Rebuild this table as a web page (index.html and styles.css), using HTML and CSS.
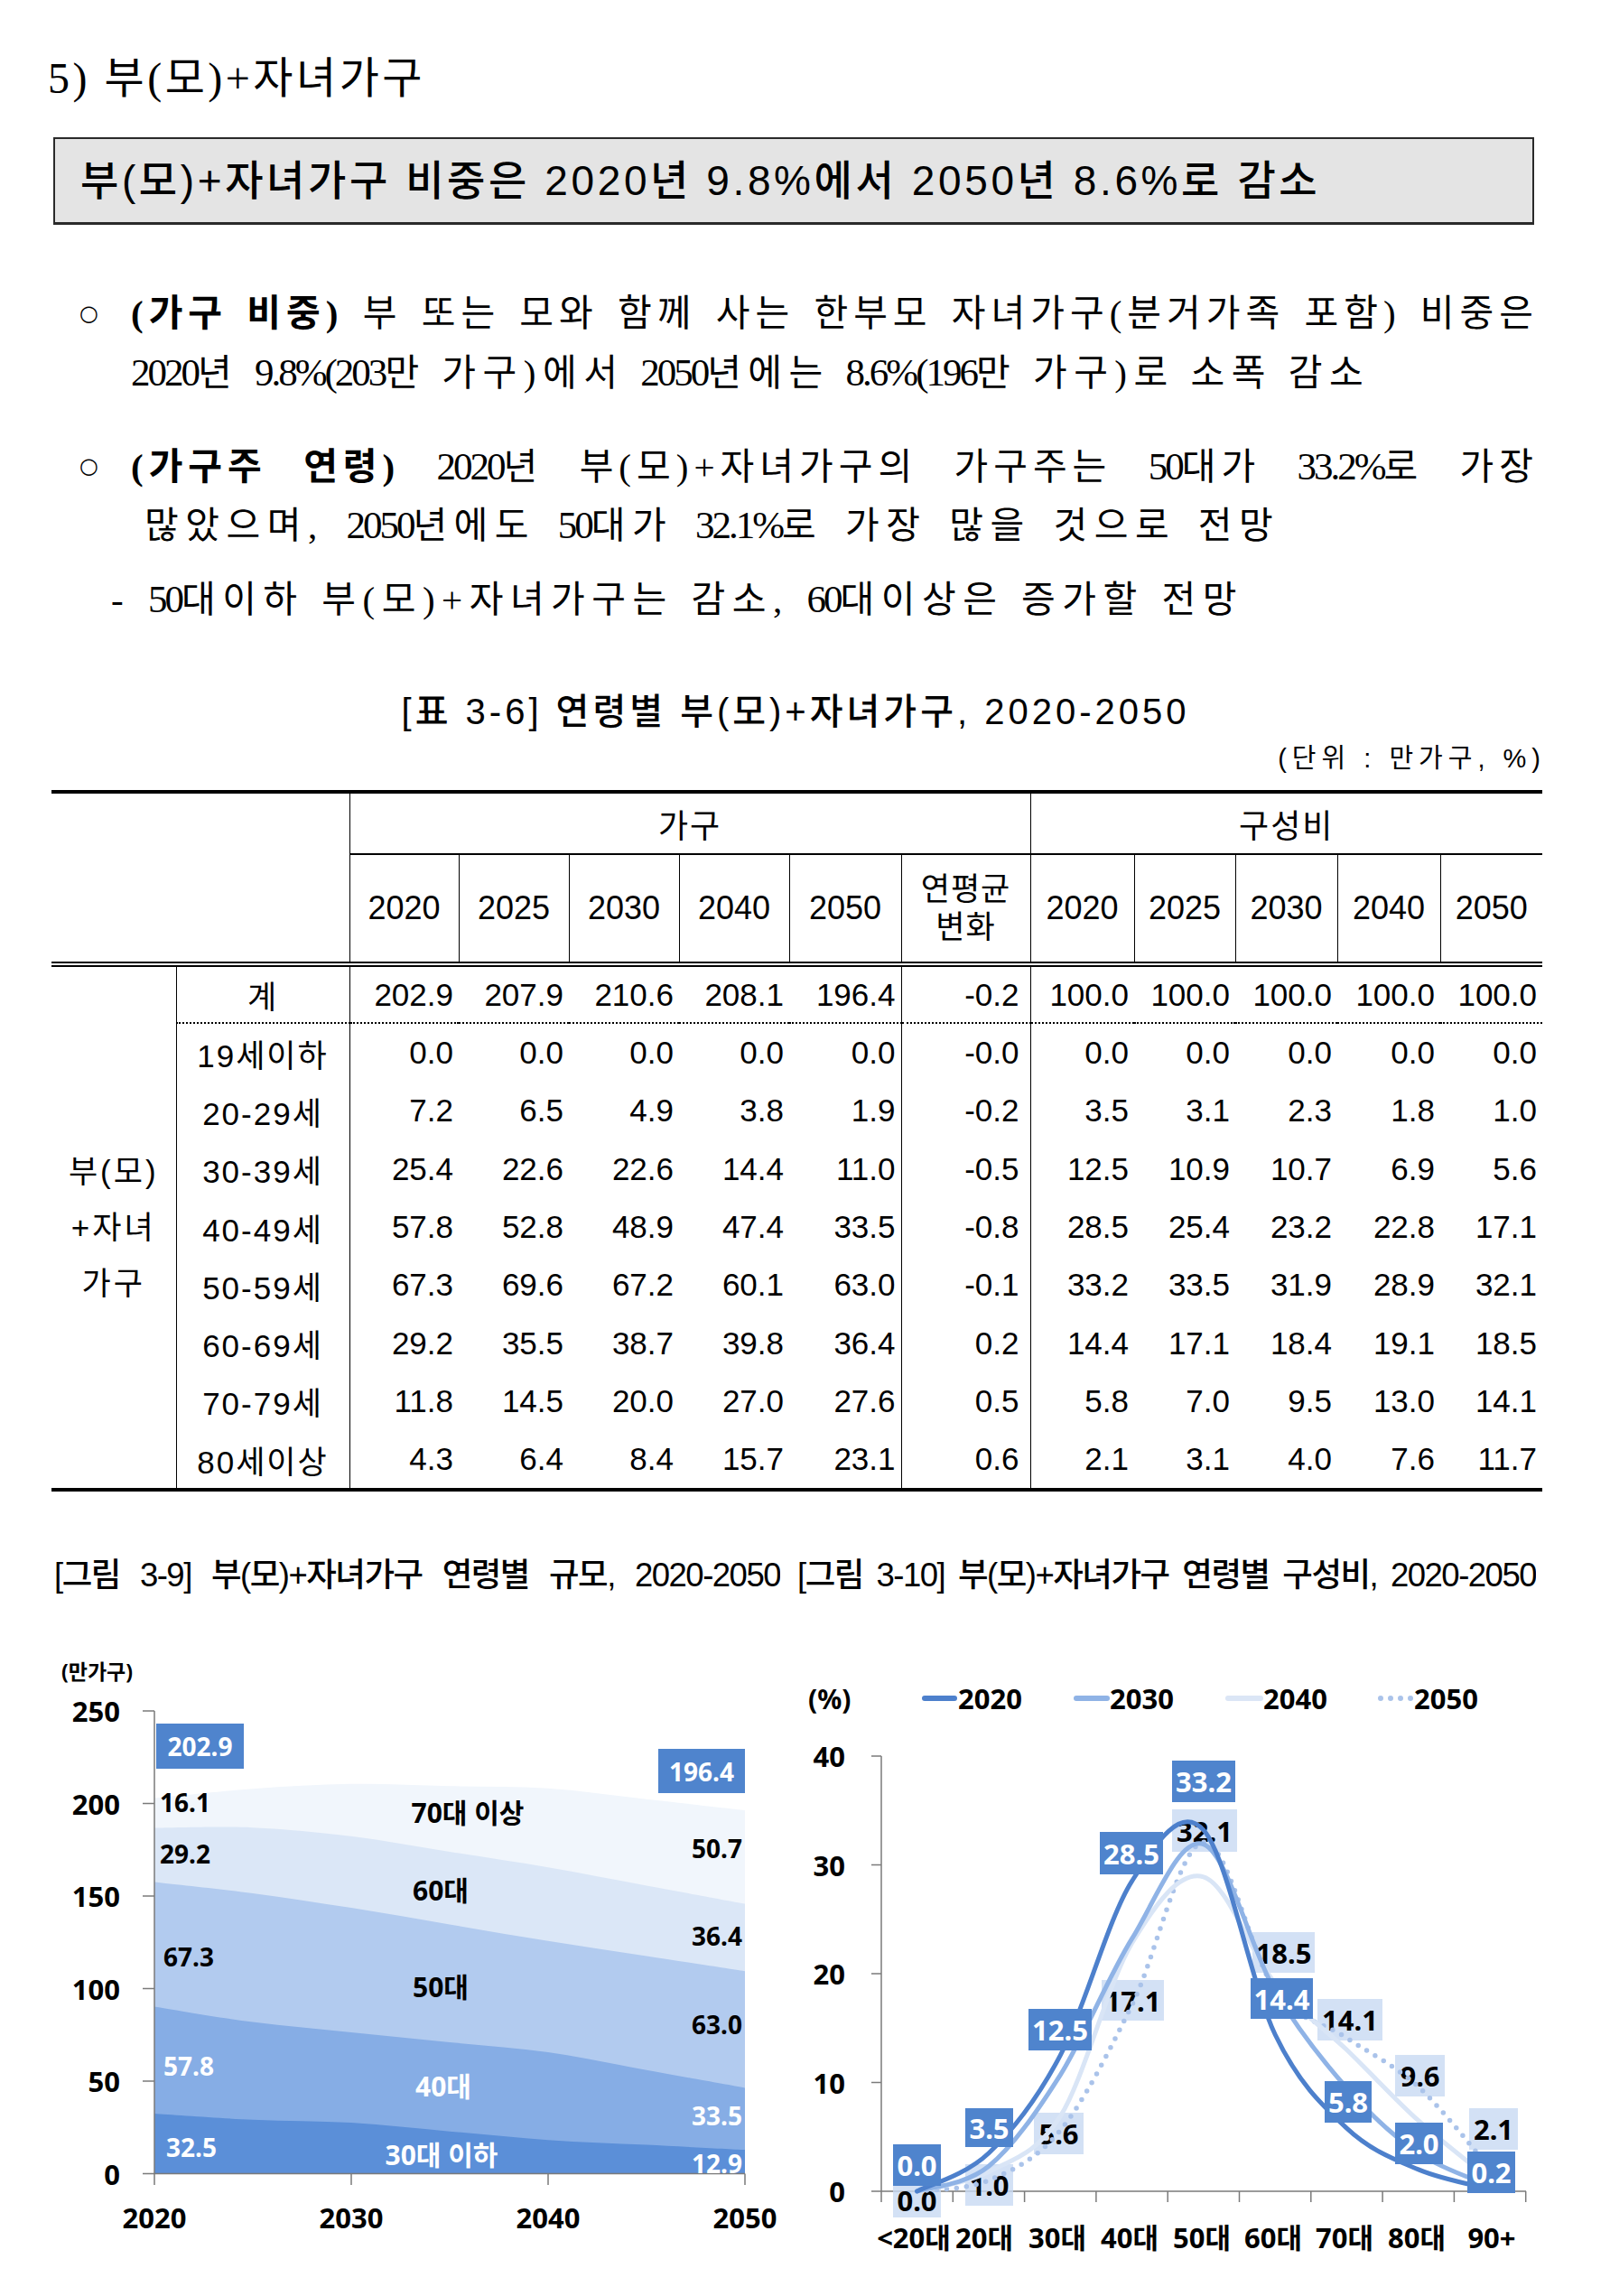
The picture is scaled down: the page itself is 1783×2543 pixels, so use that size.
FILE: index.html
```html
<!DOCTYPE html>
<html lang="ko">
<head>
<meta charset="utf-8">
<title>부(모)+자녀가구</title>
<link rel="stylesheet" href="styles.css">
</head>
<body>
<div class="page">
  <h1 class="sec-title">5) 부(모)+자녀가구</h1>
  <div class="summary">부(모)+자녀가구 비중은 2020년 9.8%에서 2050년 8.6%로 감소</div>

  <div class="bul b1">
    <span class="mk">○</span>
    <div class="tx">
      <div class="ln just"><b>(가구 비중)</b> 부 또는 모와 함께 사는 한부모 자녀가구(분거가족 포함) 비중은</div>
      <div class="ln"><span class="n">2020</span>년 <span class="n">9.8%(203</span>만 가구)에서 <span class="n">2050</span>년에는 <span class="n">8.6%(196</span>만 가구)로 소폭 감소</div>
    </div>
  </div>
  <div class="bul b2">
    <span class="mk">○</span>
    <div class="tx">
      <div class="ln just"><b>(가구주 연령)</b> <span class="n">2020</span>년 부(모)+자녀가구의 가구주는 <span class="n">50</span>대가 <span class="n">33.2%</span>로 가장</div>
      <div class="ln in2">많았으며, <span class="n">2050</span>년에도 <span class="n">50</span>대가 <span class="n">32.1%</span>로 가장 많을 것으로 전망</div>
    </div>
  </div>
  <div class="dash">- <span class="n">50</span>대이하 부(모)+자녀가구는 감소, <span class="n">60</span>대이상은 증가할 전망</div>

  <div class="caption">[표 3-6] 연령별 부(모)+자녀가구, 2020-2050</div>
  <div class="unit">(단위 : 만가구, %)</div>

  <table class="tbl">
    <colgroup>
      <col class="w138"><col class="w192">
      <col class="w121"><col class="w122"><col class="w122"><col class="w122"><col class="w124">
      <col class="w143">
      <col class="w115"><col class="w112"><col class="w113"><col class="w114"><col class="w113">
    </colgroup>
    <thead>
      <tr class="hr1">
        <th class="corner" colspan="2" rowspan="2"></th>
        <th class="grp g1" colspan="6">가구</th>
        <th class="grp" colspan="5">구성비</th>
      </tr>
      <tr class="hr2">
        <th>2020</th><th>2025</th><th>2030</th><th>2040</th><th>2050</th>
        <th class="chgh">연평균<br>변화</th>
        <th>2020</th><th>2025</th><th>2030</th><th>2040</th><th>2050</th>
      </tr>
    </thead>
    <tbody>
      <tr class="total">
        <td class="grpl" rowspan="9">부(모)<br>+자녀<br>가구</td>
        <td class="age">계</td>
        <td>202.9</td><td>207.9</td><td>210.6</td><td>208.1</td><td>196.4</td>
        <td class="chg">-0.2</td>
        <td>100.0</td><td>100.0</td><td>100.0</td><td>100.0</td><td>100.0</td>
      </tr>
      <tr>
        <td class="age">19세이하</td>
        <td>0.0</td><td>0.0</td><td>0.0</td><td>0.0</td><td>0.0</td>
        <td class="chg">-0.0</td>
        <td>0.0</td><td>0.0</td><td>0.0</td><td>0.0</td><td>0.0</td>
      </tr>
      <tr>
        <td class="age">20-29세</td>
        <td>7.2</td><td>6.5</td><td>4.9</td><td>3.8</td><td>1.9</td>
        <td class="chg">-0.2</td>
        <td>3.5</td><td>3.1</td><td>2.3</td><td>1.8</td><td>1.0</td>
      </tr>
      <tr>
        <td class="age">30-39세</td>
        <td>25.4</td><td>22.6</td><td>22.6</td><td>14.4</td><td>11.0</td>
        <td class="chg">-0.5</td>
        <td>12.5</td><td>10.9</td><td>10.7</td><td>6.9</td><td>5.6</td>
      </tr>
      <tr>
        <td class="age">40-49세</td>
        <td>57.8</td><td>52.8</td><td>48.9</td><td>47.4</td><td>33.5</td>
        <td class="chg">-0.8</td>
        <td>28.5</td><td>25.4</td><td>23.2</td><td>22.8</td><td>17.1</td>
      </tr>
      <tr>
        <td class="age">50-59세</td>
        <td>67.3</td><td>69.6</td><td>67.2</td><td>60.1</td><td>63.0</td>
        <td class="chg">-0.1</td>
        <td>33.2</td><td>33.5</td><td>31.9</td><td>28.9</td><td>32.1</td>
      </tr>
      <tr>
        <td class="age">60-69세</td>
        <td>29.2</td><td>35.5</td><td>38.7</td><td>39.8</td><td>36.4</td>
        <td class="chg">0.2</td>
        <td>14.4</td><td>17.1</td><td>18.4</td><td>19.1</td><td>18.5</td>
      </tr>
      <tr>
        <td class="age">70-79세</td>
        <td>11.8</td><td>14.5</td><td>20.0</td><td>27.0</td><td>27.6</td>
        <td class="chg">0.5</td>
        <td>5.8</td><td>7.0</td><td>9.5</td><td>13.0</td><td>14.1</td>
      </tr>
      <tr>
        <td class="age">80세이상</td>
        <td>4.3</td><td>6.4</td><td>8.4</td><td>15.7</td><td>23.1</td>
        <td class="chg">0.6</td>
        <td>2.1</td><td>3.1</td><td>4.0</td><td>7.6</td><td>11.7</td>
      </tr>
    </tbody>
  </table>

  <div class="fig-titles">
    <span class="ft ft1">[그림 3-9] 부(모)+자녀가구 연령별 규모, 2020-2050</span>
    <span class="ft ft2">[그림 3-10] 부(모)+자녀가구 연령별 구성비, 2020-2050</span>
  </div>

  <div class="charts">
    <svg class="chart-l" width="880" height="740" viewBox="0 1790 880 740">
      <path id="a5" class="ar5" d=""/>
      <path id="a4" class="ar4" d=""/>
      <path id="a3" class="ar3" d=""/>
      <path id="a2" class="ar2" d=""/>
      <path id="a1" class="ar1" d=""/>

      <line class="ax" x1="171" y1="1897" x2="171" y2="2409.5"/>
      <line class="ax" x1="158" y1="1897" x2="171" y2="1897"/>
      <line class="ax" x1="158" y1="1999.5" x2="171" y2="1999.5"/>
      <line class="ax" x1="158" y1="2102" x2="171" y2="2102"/>
      <line class="ax" x1="158" y1="2204.5" x2="171" y2="2204.5"/>
      <line class="ax" x1="158" y1="2307" x2="171" y2="2307"/>
      <line class="ax" x1="158" y1="2409.5" x2="825" y2="2409.5"/>
      <line class="ax" x1="171" y1="2409.5" x2="171" y2="2422"/>
      <line class="ax" x1="389" y1="2409.5" x2="389" y2="2422"/>
      <line class="ax" x1="607" y1="2409.5" x2="607" y2="2422"/>
      <line class="ax" x1="825" y1="2409.5" x2="825" y2="2422"/>

      <text class="ct unitl" x="68" y="1853">(만가구)</text>
      <text class="ct yl" x="133" y="1897">250</text>
      <text class="ct yl" x="133" y="1999.5">200</text>
      <text class="ct yl" x="133" y="2102">150</text>
      <text class="ct yl" x="133" y="2204.5">100</text>
      <text class="ct yl" x="133" y="2307">50</text>
      <text class="ct yl" x="133" y="2409.5">0</text>
      <text class="ct xl" x="171" y="2458">2020</text>
      <text class="ct xl" x="389" y="2458">2030</text>
      <text class="ct xl" x="607" y="2458">2040</text>
      <text class="ct xl" x="825" y="2458">2050</text>

      <rect class="bx-d" x="173" y="1911" width="97" height="50"/>
      <text class="ct vl mid wt" x="221.5" y="1936">202.9</text>
      <rect class="bx-d" x="729" y="1939" width="96" height="49"/>
      <text class="ct vl mid wt" x="777" y="1963.5">196.4</text>

      <text class="ct vl" x="177" y="1998">16.1</text>
      <text class="ct vl" x="177" y="2055">29.2</text>
      <text class="ct vl" x="181" y="2169">67.3</text>
      <text class="ct vl wt" x="181" y="2290">57.8</text>
      <text class="ct vl wt" x="184" y="2380">32.5</text>

      <text class="ct vl end" x="822" y="2049">50.7</text>
      <text class="ct vl end" x="822" y="2146">36.4</text>
      <text class="ct vl end" x="822" y="2244">63.0</text>
      <text class="ct vl end wt" x="822" y="2345">33.5</text>
      <text class="ct vl end wt" x="822" y="2398">12.9</text>

      <text class="ct cat" x="518" y="2009">70대 이상</text>
      <text class="ct cat" x="488" y="2095">60대</text>
      <text class="ct cat" x="488" y="2202">50대</text>
      <text class="ct cat wt" x="491" y="2312">40대</text>
      <text class="ct cat wt" x="489" y="2388">30대 이하</text>
    </svg>

    <svg class="chart-r" width="903" height="740" viewBox="880 1790 903 740">
      <text class="ct pct" x="895" y="1883">(%)</text>
      <line class="lg s20" x1="1024" y1="1883" x2="1057" y2="1883"/>
      <text class="ct lgt" x="1061" y="1883">2020</text>
      <line class="lg s30" x1="1192" y1="1883" x2="1226" y2="1883"/>
      <text class="ct lgt" x="1229" y="1883">2030</text>
      <line class="lg s40" x1="1360" y1="1883" x2="1396" y2="1883"/>
      <text class="ct lgt" x="1399" y="1883">2040</text>
      <line class="lg s50" x1="1529" y1="1883" x2="1563" y2="1883"/>
      <text class="ct lgt" x="1566" y="1883">2050</text>

      <line class="ax" x1="976" y1="1947" x2="976" y2="2429"/>
      <line class="ax" x1="965" y1="1947" x2="976" y2="1947"/>
      <line class="ax" x1="965" y1="2067.5" x2="976" y2="2067.5"/>
      <line class="ax" x1="965" y1="2188" x2="976" y2="2188"/>
      <line class="ax" x1="965" y1="2308.5" x2="976" y2="2308.5"/>
      <line class="ax" x1="965" y1="2429" x2="1690" y2="2429"/>
      <line class="ax" x1="976" y1="2429" x2="976" y2="2441"/>
      <line class="ax" x1="1055.3" y1="2429" x2="1055.3" y2="2441"/>
      <line class="ax" x1="1134.6" y1="2429" x2="1134.6" y2="2441"/>
      <line class="ax" x1="1213.9" y1="2429" x2="1213.9" y2="2441"/>
      <line class="ax" x1="1293.2" y1="2429" x2="1293.2" y2="2441"/>
      <line class="ax" x1="1372.5" y1="2429" x2="1372.5" y2="2441"/>
      <line class="ax" x1="1451.8" y1="2429" x2="1451.8" y2="2441"/>
      <line class="ax" x1="1531.1" y1="2429" x2="1531.1" y2="2441"/>
      <line class="ax" x1="1610.4" y1="2429" x2="1610.4" y2="2441"/>
      <line class="ax" x1="1689.7" y1="2429" x2="1689.7" y2="2441"/>

      <text class="ct yl" x="936" y="1947">40</text>
      <text class="ct yl" x="936" y="2067.5">30</text>
      <text class="ct yl" x="936" y="2188">20</text>
      <text class="ct yl" x="936" y="2308.5">10</text>
      <text class="ct yl" x="936" y="2429">0</text>

      <text class="ct xl" x="1012" y="2480">&lt;20대</text>
      <text class="ct xl" x="1090" y="2480">20대</text>
      <text class="ct xl" x="1171" y="2480">30대</text>
      <text class="ct xl" x="1251" y="2480">40대</text>
      <text class="ct xl" x="1331" y="2480">50대</text>
      <text class="ct xl" x="1410" y="2480">60대</text>
      <text class="ct xl" x="1489" y="2480">70대</text>
      <text class="ct xl" x="1569" y="2480">80대</text>
      <text class="ct xl" x="1652" y="2480">90+</text>

      <g class="lights">
        <rect class="bx-l" x="989" y="2420" width="53" height="38"/>
        <text class="ct rl" x="1015.5" y="2439">0.0</text>
        <rect class="bx-l" x="1069" y="2399" width="53" height="46"/>
        <text class="ct rl" x="1095.5" y="2422">1.0</text>
        <rect class="bx-l" x="1145" y="2342" width="55" height="46"/>
        <text class="ct rl" x="1172.5" y="2365">5.6</text>
        <rect class="bx-l" x="1220" y="2195" width="69" height="45"/>
        <text class="ct rl" x="1254.5" y="2217.5">17.1</text>
        <rect class="bx-l" x="1298" y="2006" width="72" height="47"/>
        <text class="ct rl" x="1334" y="2029.5">32.1</text>
        <rect class="bx-l" x="1387" y="2142" width="69" height="45"/>
        <text class="ct rl" x="1421.5" y="2164.5">18.5</text>
        <rect class="bx-l" x="1459" y="2216" width="72" height="46"/>
        <text class="ct rl" x="1495" y="2239">14.1</text>
        <rect class="bx-l" x="1545" y="2278" width="55" height="46"/>
        <text class="ct rl" x="1572.5" y="2301">9.6</text>
        <rect class="bx-l" x="1627" y="2337" width="54" height="46"/>
        <text class="ct rl" x="1654" y="2360">2.1</text>
      </g>

      <path id="s50" class="ln50" d=""/>
      <path id="s40" class="ln40" d=""/>
      <path id="s30" class="ln30" d=""/>
      <path id="s20" class="ln20" d=""/>

      <g class="darks">
        <rect class="bx-d" x="989" y="2377" width="53" height="46"/>
        <text class="ct rl wt" x="1015.5" y="2400">0.0</text>
        <rect class="bx-d" x="1069" y="2337" width="53" height="43"/>
        <text class="ct rl wt" x="1095.5" y="2358.5">3.5</text>
        <rect class="bx-d" x="1139" y="2227" width="70" height="46"/>
        <text class="ct rl wt" x="1174" y="2250">12.5</text>
        <rect class="bx-d" x="1218" y="2031" width="70" height="47"/>
        <text class="ct rl wt" x="1253" y="2054.5">28.5</text>
        <rect class="bx-d" x="1298" y="1952" width="70" height="46"/>
        <text class="ct rl wt" x="1333" y="1975">33.2</text>
        <rect class="bx-d" x="1385" y="2193" width="69" height="45"/>
        <text class="ct rl wt" x="1419.5" y="2215.5">14.4</text>
        <rect class="bx-d" x="1467" y="2307" width="52" height="46"/>
        <text class="ct rl wt" x="1493" y="2330">5.8</text>
        <rect class="bx-d" x="1545" y="2353" width="53" height="46"/>
        <text class="ct rl wt" x="1571.5" y="2376">2.0</text>
        <rect class="bx-d" x="1625" y="2385" width="53" height="46"/>
        <text class="ct rl wt" x="1651.5" y="2408">0.2</text>
      </g>
    </svg>
  </div>
</div>
<script src="script.js"></script>
</body>
</html>
```

FILE: styles.css
```css
html, body {
  margin: 0;
  padding: 0;
  background: #ffffff;
}
body {
  color: #000;
  font-family: "Liberation Serif", "Noto Sans CJK KR", serif;
}
.page {
  width: 1783px;
  padding-top: 57px;
}
.sec-title {
  margin: 0 0 0 53px;
  height: 60px;
  font-size: 48px;
  line-height: 60px;
  font-weight: 400;
  letter-spacing: 3.5px;
  white-space: nowrap;
}
.summary {
  margin: 35px 0 0 59px;
  width: 1640px;
  height: 97px;
  box-sizing: border-box;
  border: 2px solid #2a2a2a;
  border-bottom-width: 3px;
  background: #e4e4e4;
  padding-left: 28px;
  font-family: "Liberation Sans", "Noto Sans CJK KR", sans-serif;
  font-size: 46px;
  line-height: 92px;
  font-weight: 500;
  letter-spacing: 3.6px;
  white-space: nowrap;
}
.bul {
  display: flex;
  margin-left: 88px;
  width: 1616px;
  font-size: 41px;
  line-height: 65px;
  letter-spacing: 7.5px;
}
.b1 { margin-top: 66px; }
.b2 { margin-top: 39px; }
.mk {
  flex: none;
  width: 57px;
  font-family: "DejaVu Sans", sans-serif;
  font-size: 24px;
  line-height: 65px;
  height: 65px;
  letter-spacing: 0;
}
.tx { flex: 1; min-width: 0; }
.ln { height: 65px; white-space: nowrap; }
.ln.just {
  white-space: normal;
  letter-spacing: 6px;
  text-align: justify;
  text-align-last: justify;
  overflow: hidden;
}
.ln b { font-weight: 700; }
.n {
  font-size: 43px;
  letter-spacing: -3px;
}
.in2 { padding-left: 15px; word-spacing: 7px; }
.dash {
  margin: 18px 0 0 123px;
  height: 64px;
  font-size: 41px;
  line-height: 64px;
  letter-spacing: 7.5px;
  word-spacing: 2px;
  white-space: nowrap;
}
.caption {
  margin-top: 68px;
  width: 1762px;
  height: 48px;
  text-align: center;
  font-family: "Liberation Sans", "Noto Sans CJK KR", sans-serif;
  font-size: 40px;
  line-height: 48px;
  font-weight: 500;
  letter-spacing: 4px;
  white-space: nowrap;
}
.unit {
  margin-top: 10px;
  width: 1712px;
  height: 36px;
  text-align: right;
  font-family: "Liberation Sans", "Noto Sans CJK KR", sans-serif;
  font-size: 29px;
  line-height: 36px;
  letter-spacing: 6px;
  white-space: nowrap;
}

/* table */
.tbl {
  margin: 17px 0 0 57px;
  width: 1651px;
  table-layout: fixed;
  border-collapse: collapse;
  border-top: 4px solid #000;
  border-bottom: 4px solid #000;
  font-family: "Liberation Sans", "Noto Sans CJK KR", sans-serif;
  font-size: 36px;
}
.w138 { width: 138px; }
.w192 { width: 192px; }
.w121 { width: 121px; }
.w122 { width: 122px; }
.w124 { width: 124px; }
.w143 { width: 143px; }
.w115 { width: 115px; }
.w112 { width: 112px; }
.w113 { width: 113px; }
.w114 { width: 114px; }
.tbl th, .tbl td {
  padding: 0;
  font-weight: 400;
  vertical-align: middle;
  white-space: nowrap;
}
.tbl .hr1 th { height: 66px; }
.tbl .grp {
  text-align: center;
  border-bottom: 2px solid #000;
  letter-spacing: 2px;
}
.tbl .g1 { border-right: 1px solid #000; }
.tbl .corner {
  border-right: 1px solid #000;
  border-bottom: 6px double #000;
}
.tbl .hr2 th {
  height: 118px;
  text-align: center;
  border-right: 1px solid #000;
  border-bottom: 6px double #000;
}
.tbl .hr2 th:last-child { border-right: 0; }
.tbl .hr2 .chgh {
  font-size: 35px;
  line-height: 42px;
  letter-spacing: 1px;
}
.tbl td {
  height: 64.3px;
  text-align: right;
  padding-right: 6px;
  font-size: 35px;
}
.tbl tr.total td { height: 61px; }
.tbl tr.total td:not(.grpl) { border-bottom: 2px dotted #000; }
.tbl td.grpl {
  text-align: center;
  padding: 0;
  border-right: 1px solid #000;
  line-height: 62px;
  letter-spacing: 3px;
  font-size: 35px;
}
.tbl td.age {
  text-align: center;
  padding: 0;
  border-right: 1px solid #000;
  letter-spacing: 2px;
}
.tbl td.chg {
  padding-right: 12px;
  border-left: 1px solid #000;
  border-right: 1px solid #000;
}

/* figure titles */
.fig-titles {
  display: flex;
  margin-top: 71px;
  height: 44px;
  font-family: "Liberation Sans", "Noto Sans CJK KR", sans-serif;
  font-size: 36.5px;
  font-weight: 500;
  line-height: 44px;
  overflow: hidden;
}
.ft {
  display: block;
  height: 44px;
  text-align: justify;
  text-align-last: justify;
  overflow: hidden;
  letter-spacing: -1.5px;
}
.ft1 { margin-left: 60px; width: 804px; }
.ft2 { margin-left: 19px; width: 818px; }

/* charts */
.charts {
  display: flex;
  margin-top: 21px;
  height: 740px;
}
.charts svg { display: block; flex: none; }
.ct {
  font-family: "Noto Sans", "Noto Sans CJK KR", sans-serif;
  font-weight: 700;
  dominant-baseline: central;
  fill: #000;
}
.unitl { font-size: 23px; }
.yl { font-size: 31px; text-anchor: end; }
.xl { font-size: 31px; text-anchor: middle; }
.vl { font-size: 28px; }
.cat { font-size: 30px; text-anchor: middle; }
.pct { font-size: 30px; }
.lgt { font-size: 31px; }
.rl { font-size: 31px; text-anchor: middle; }
.mid { text-anchor: middle; }
.end { text-anchor: end; }
.ct.wt { fill: #ffffff; }
.ax { stroke: #7a7a7a; stroke-width: 1.5; }

.ar5 { fill: #f1f6fc; }
.ar4 { fill: #dbe7f7; }
.ar3 { fill: #b2cbef; }
.ar2 { fill: #86ade5; }
.ar1 { fill: #5b8fd8; }

.bx-d { fill: #4f84cd; }
.bx-l { fill: rgba(200, 218, 242, 0.8); }

.lg { stroke-width: 6; stroke-linecap: round; fill: none; }
.s20 { stroke: #4d80cc; }
.s30 { stroke: #8fb3e6; }
.s40 { stroke: #dbe6f6; }
.s50 { stroke: #aac3ea; stroke-dasharray: 0 11; }

.ln20, .ln30, .ln40, .ln50 { fill: none; stroke-width: 5; stroke-linecap: round; stroke-linejoin: round; }
.ln20 { stroke: #4d80cc; }
.ln30 { stroke: #8fb3e6; }
.ln40 { stroke: #d9e5f6; }
.ln50 { stroke: #aac3ea; stroke-width: 5.5; stroke-dasharray: 0 11; }
```

FILE: script.js
```js
(function () {
  function smooth(p) {
    var d = 'M' + p[0][0].toFixed(1) + ',' + p[0][1].toFixed(1);
    for (var i = 0; i < p.length - 1; i++) {
      var p0 = p[i - 1] || p[i], p1 = p[i], p2 = p[i + 1], p3 = p[i + 2] || p2;
      var c1x = p1[0] + (p2[0] - p0[0]) / 6, c1y = p1[1] + (p2[1] - p0[1]) / 6;
      var c2x = p2[0] - (p3[0] - p1[0]) / 6, c2y = p2[1] - (p3[1] - p1[1]) / 6;
      d += ' C' + c1x.toFixed(1) + ',' + c1y.toFixed(1) + ' ' + c2x.toFixed(1) + ',' + c2y.toFixed(1) + ' ' + p2[0].toFixed(1) + ',' + p2[1].toFixed(1);
    }
    return d;
  }

  /* stacked area (left) */
  var years = [2020, 2025, 2030, 2035, 2040, 2045, 2050];
  var xs = years.map(function (y) { return 171 + (y - 2020) * 654 / 30; });
  var Y = function (v) { return 2409.5 - 2.05 * v; };
  var cum = [
    [32.5, 29.1, 27.5, 22.85, 18.2, 15.55, 12.9],
    [90.3, 81.9, 76.4, 71.0, 65.6, 56.0, 46.4],
    [157.6, 151.5, 143.6, 134.65, 125.7, 117.55, 109.4],
    [186.8, 187.0, 182.3, 173.9, 165.5, 155.65, 145.8],
    [202.9, 207.9, 210.6, 209.4, 208.2, 202.3, 196.4]
  ];
  cum.forEach(function (row, i) {
    var pts = row.map(function (v, j) { return [xs[j], Y(v)]; });
    document.getElementById('a' + (i + 1)).setAttribute('d', smooth(pts) + ' L825,2409.5 L171,2409.5 Z');
  });

  /* line chart (right) */
  var cx = function (i) { return 1015.65 + 79.3 * i; };
  var Yr = function (v) { return 2429 - 12.05 * v; };
  var series = {
    s20: [0.0, 3.5, 12.5, 28.5, 33.2, 14.4, 5.8, 2.0, 0.2],
    s30: [0.0, 2.3, 10.7, 23.2, 31.9, 18.4, 9.5, 3.5, 0.5],
    s40: [0.0, 1.8, 6.9, 22.8, 28.9, 19.1, 13.0, 6.5, 1.1],
    s50: [0.0, 1.0, 5.6, 17.1, 32.1, 18.5, 14.1, 9.6, 2.1]
  };
  Object.keys(series).forEach(function (k) {
    var pts = series[k].map(function (v, i) { return [cx(i), Yr(v)]; });
    document.getElementById(k).setAttribute('d', smooth(pts));
  });
})();
```
